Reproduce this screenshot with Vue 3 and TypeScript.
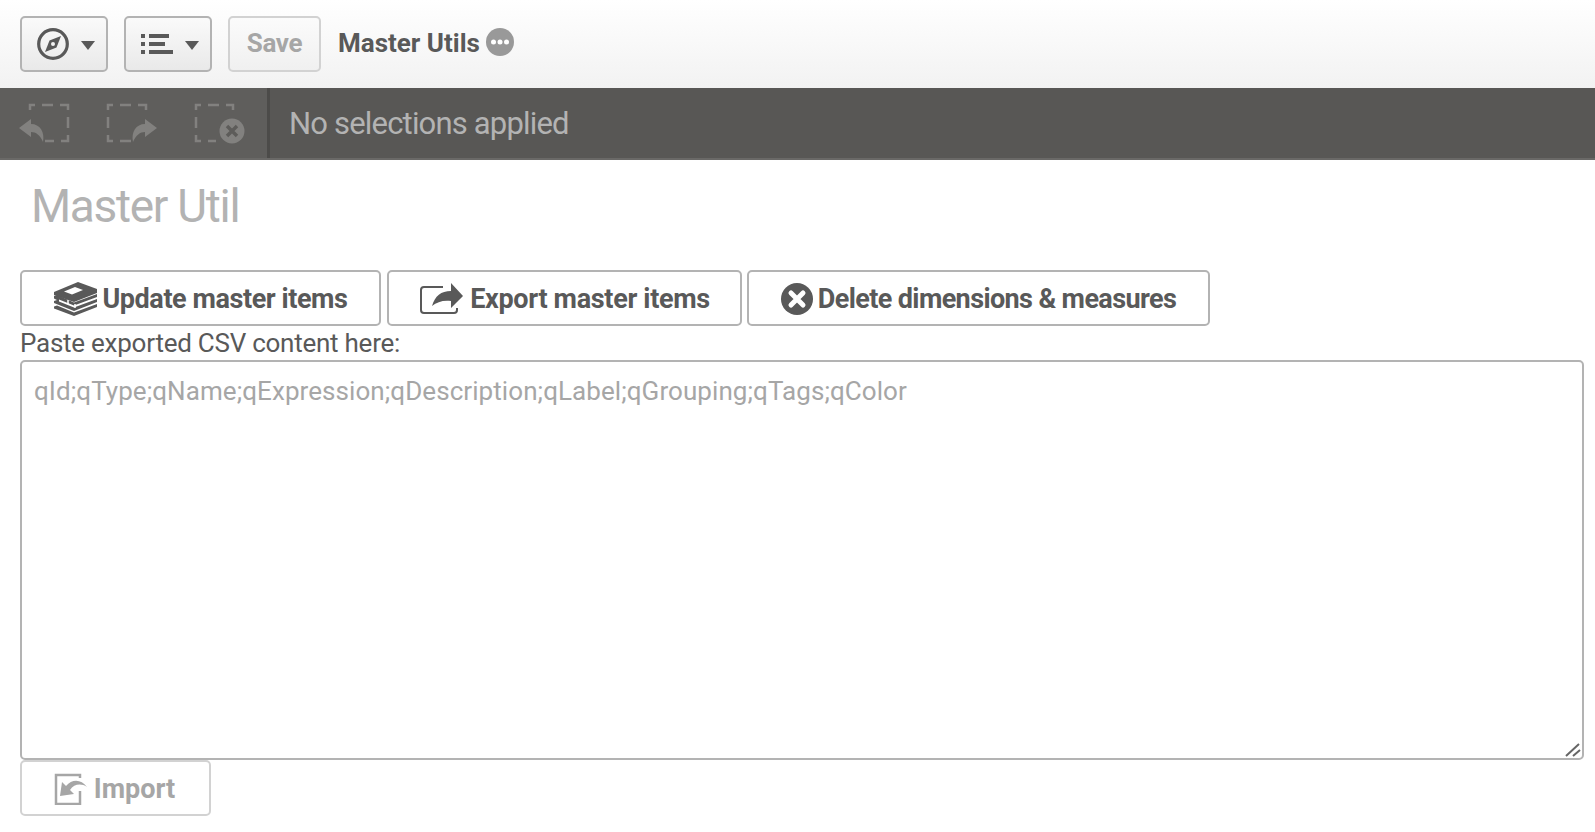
<script setup lang="ts">
const actions = ['Update master items', 'Export master items', 'Delete dimensions & measures']
</script>

<template>
  <div class="page">
    <header class="toolbar">
      <button class="tool nav">
        <svg width="32" height="32" viewBox="0 0 32 32">
          <circle cx="16" cy="16" r="14.300" fill="none" stroke="#595959" stroke-width="3.200" />
          <path d="M24 8 L19.500 19.500 L8 24 L12.500 12.500 Z" fill="#595959" />
          <circle cx="16" cy="16" r="2" fill="#f4f4f4" />
        </svg>
        <span class="caret"></span>
      </button>
      <button class="tool nav">
        <svg width="32" height="20" viewBox="0 0 32 20">
          <path d="M0 0h4v4h-4zM8 0h20v4h-20zM0 8h4v4h-4zM8 8h16v4h-16zM0 16h4v4h-4zM8 16h24v4h-24z" fill="#595959" />
        </svg>
        <span class="caret"></span>
      </button>
      <button class="tool save">Save</button>
      <span class="app-name">Master Utils</span>
      <svg class="more" width="28" height="28" viewBox="0 0 28 28">
        <circle cx="14" cy="14" r="14" fill="#999" />
        <circle cx="7.500" cy="14" r="2.500" fill="#fff" />
        <circle cx="14" cy="14" r="2.500" fill="#fff" />
        <circle cx="20.500" cy="14" r="2.500" fill="#fff" />
      </svg>
    </header>

    <section class="selections">
      <div class="sel-tools">
        <div class="sel-cell">
          <svg width="60" height="48" viewBox="0 0 60 48">
            <path class="dash" d="M16 10V5H21M28 5H39M46 5H54V10M54 17V28M54 35V41H47M40 41H31" />
            <path class="solid" d="M5 28 L17 19 V24 C26 24 31 32 29 42 C26 35 22 32 17 32 V37 Z" />
          </svg>
        </div>
        <div class="sel-cell">
          <svg width="60" height="48" viewBox="0 0 60 48">
            <path class="dash" d="M6 10V5H11M18 5H29M36 5H44V10M6 17V28M6 35V41H11M18 41H29" />
            <path class="solid" d="M55 28 L43 19 V24 C34 24 29 32 31 42 C34 35 38 32 43 32 V37 Z" />
          </svg>
        </div>
        <div class="sel-cell">
          <svg width="60" height="48" viewBox="0 0 60 48">
            <path class="dash" d="M6 10V5H11M18 5H29M36 5H43V10M6 17V28M6 35V41H11M18 41H26" />
            <circle class="solid" cx="42" cy="31" r="12.500" />
            <path d="M37 26L47 36M47 26L37 36" fill="none" stroke="#5d5c5a" stroke-width="3.500" />
          </svg>
        </div>
      </div>
      <div class="sel-text">No selections applied</div>
    </section>

    <main class="content">
      <h1 class="title">Master Util</h1>
      <div class="actions">
        <button class="action a1">
          <svg width="44" height="34" viewBox="0 0 44 34">
            <path d="M1 10 L25 0 L44 7 V11 L21 20 L1 13 Z" fill="#595959" />
            <path d="M11 9.500 L22 5 L30 8 L19 12.500 Z" fill="#fff" />
            <path d="M1 14 L4 13 L21 20.500 L44 12 V15 L21 23.500 L6 17.500 V19.500 L21 25.500 L44 17 V20 L21 29 L1 21 V19 L4 18 L1 16.500 Z" fill="#595959" />
            <path d="M1 24.500 L4 23.500 L21 30.500 L44 22 V25 L21 34 L1 26.500 Z" fill="#595959" />
            <path d="M15 18V22M22 22V26" stroke="#fff" stroke-width="1.500" />
          </svg>
          <span>{{ actions[0] }}</span>
        </button>
        <button class="action a2">
          <svg width="46" height="34" viewBox="0 0 46 34">
            <path d="M24 5H5a3 3 0 0 0-3 3V28a3 3 0 0 0 3 3H35a3 3 0 0 0 3-3V26" fill="none" stroke="#595959" stroke-width="2" />
            <path d="M32 1 L44 14 L32 26 V19 C24 18 18 20 13 24 C16 14 22 9 32 9 Z" fill="#595959" />
          </svg>
          <span>{{ actions[1] }}</span>
        </button>
        <button class="action a3">
          <svg width="32" height="32" viewBox="0 0 32 32">
            <circle cx="16" cy="16" r="16" fill="#595959" />
            <path d="M10 10L22 22M22 10L10 22" fill="none" stroke="#fff" stroke-width="5" stroke-linecap="round" />
          </svg>
          <span>{{ actions[2] }}</span>
        </button>
      </div>
      <label class="csv-label" for="csv">Paste exported CSV content here:</label>
      <div class="csv-wrap">
        <textarea
          id="csv"
          class="csv"
          placeholder="qId;qType;qName;qExpression;qDescription;qLabel;qGrouping;qTags;qColor"
        ></textarea>
        <svg class="grip" width="16" height="14" viewBox="0 0 16 14">
          <path d="M1 13L14 1M8 13L15 7" fill="none" stroke="#666" stroke-width="2" />
        </svg>
      </div>
      <button class="import">
        <svg width="36" height="32" viewBox="0 0 36 32">
          <path d="M26 5V2H2V31H26V18" fill="none" stroke="#a6a6a6" stroke-width="2.500" />
          <path d="M6 23 L8 9 L12 13 C18 6 27 6 33 14 C27 10 20 11 16 17 L20 21 Z" fill="#a6a6a6" />
        </svg>
        <span>Import</span>
      </button>
    </main>
  </div>
</template>

<style>
html, body { margin: 0; background: #fff; overflow: hidden; }
</style>

<style scoped>
.page {
  width: 1595px;
  height: 832px;
  overflow: hidden;
  font-family: Roboto, "Liberation Sans", sans-serif;
  color: #595959;
}
button { font-family: inherit; cursor: default; }
.toolbar {
  height: 88px;
  box-sizing: border-box;
  padding: 16px 0 16px 20px;
  display: flex;
  align-items: flex-start;
  gap: 16px;
  background: linear-gradient(#fff, #f2f2f2);
}
.tool {
  height: 56px;
  box-sizing: border-box;
  border: 2px solid #b3b3b3;
  border-radius: 5px;
  background: linear-gradient(#fafafa, #e9e9e9);
  padding: 0;
}
.nav {
  width: 88px;
  padding-left: 4px;
  display: flex;
  align-items: center;
  justify-content: center;
  gap: 12px;
}
.caret {
  width: 0;
  height: 0;
  border-left: 7px solid transparent;
  border-right: 7px solid transparent;
  border-top: 9px solid #595959;
  margin-top: 3px;
}
.save {
  width: 93px;
  padding-bottom: 2px;
  border-color: #d2d2d2;
  background: linear-gradient(#fbfbfb, #f0f0f0);
  color: #a6a6a6;
  font-size: 26px;
  font-weight: 700;
  letter-spacing: -0.3px;
}
.app-name {
  margin-left: 1px;
  font-size: 26px;
  font-weight: 700;
  line-height: 54px;
}
.more { margin: 12px 0 0 -10px; }
.selections {
  height: 72px;
  display: flex;
  background: #585755;
  border-bottom: 2px solid #6a6967;
  box-sizing: border-box;
}
.sel-tools {
  width: 267px;
  display: flex;
  align-items: flex-start;
  background: #5f5e5c;
  border-right: 3px solid #4c4b49;
  padding-top: 12px;
}
.sel-cell { width: 88px; display: flex; justify-content: center; }
.dash { fill: none; stroke: #82817f; stroke-width: 2.500; }
.solid { fill: #82817f; }
.sel-text {
  margin-left: 19px;
  font-size: 31px;
  line-height: 72px;
  letter-spacing: -0.82px;
  color: #b3b3b3;
}
.content { padding: 0 10px 0 20px; display: flex; flex-direction: column; align-items: flex-start; }
.title {
  margin: 14px 0 0 11px;
  height: 69px;
  font-size: 46px;
  line-height: 64px;
  font-weight: 400;
  letter-spacing: -1.300px;
  color: #b3b3b3;
}
.actions { display: flex; gap: 6px; margin-top: 27px; }
.action, .import {
  height: 56px;
  box-sizing: border-box;
  border: 2px solid #b3b3b3;
  border-radius: 5px;
  background: #fff;
  color: #595959;
  font-size: 27px;
  font-weight: 700;
  display: flex;
  align-items: center;
  justify-content: center;
  gap: 5px;
  padding: 2px 0 0;
}
.a1 { width: 361px; letter-spacing: -0.43px; }
.a2 { width: 355px; letter-spacing: -0.33px; }
.a3 { width: 463px; margin-left: -1px; letter-spacing: -0.62px; }
.csv-label { font-size: 26px; line-height: 34px; height: 34px; letter-spacing: -0.25px; color: #595959; }
.csv-wrap { position: relative; width: 1564px; height: 400px; }
.csv {
  width: 100%;
  height: 100%;
  box-sizing: border-box;
  border: 2px solid #b3b3b3;
  border-radius: 5px;
  padding: 11px 12px;
  margin: 0;
  font-family: inherit;
  font-size: 26px;
  line-height: 36px;
  letter-spacing: 0.07px;
  color: #595959;
  outline: none;
  resize: none;
  display: block;
}
.csv::placeholder { color: #a6a6a6; opacity: 1; }
.grip { position: absolute; right: 3px; bottom: 3px; pointer-events: none; }
.import {
  width: 191px;
  height: 56px;
  margin-top: 0;
  padding-right: 2px;
  border-color: #d2d2d2;
  color: #a6a6a6;
  gap: 4px;
}
</style>
